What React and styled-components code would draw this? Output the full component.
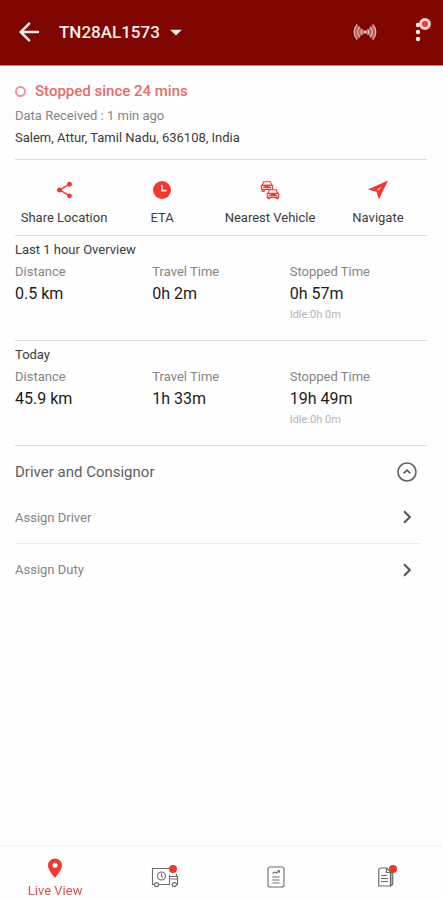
import { useState } from "react";
import styled, { createGlobalStyle } from "styled-components";
import {
  MdArrowBack,
  MdArrowDropDown,
  MdChevronRight,
  MdShare,
} from "react-icons/md";

const colors = {
  header: "#7f0600",
  accent: "#f03a30",
  status: "#e66b6b",
  text: "#3c3c3c",
  strong: "#1c1c1c",
  muted: "#858585",
  faint: "#b4b4b4",
  line: "#dcdcdc",
};

const GlobalStyle = createGlobalStyle`
  * {
    box-sizing: border-box;
  }

  body {
    margin: 0;
    background: #fefefe;
    color: ${colors.text};
    font-family: Roboto, "Liberation Sans", sans-serif;
  }

  button {
    padding: 0;
    border: none;
    background: none;
    color: inherit;
    font: inherit;
    cursor: pointer;
  }

  h1, h2, p, dl, dt, dd {
    margin: 0;
    font-weight: 400;
  }

  svg {
    display: block;
    flex: none;
  }
`;

const Page = styled.div`
  min-height: 100vh;
  display: flex;
  flex-direction: column;
`;

const Header = styled.header`
  display: flex;
  align-items: center;
  height: 66px;
  padding: 0 0 2px 14px;
  background: ${colors.header};
  border-bottom: 1px solid #b98682;
  color: #f8ece9;
`;

const VehicleButton = styled.button`
  display: flex;
  align-items: center;
  gap: 2px;
  margin: 0 auto 0 15px;

  h1 {
    font-size: 17px;
    font-weight: 500;
    line-height: 24px;
  }
`;

const HeaderButton = styled.button`
  position: relative;
  display: flex;
  justify-content: center;
  width: ${(props) => props.$width}px;
`;

const Badge = styled.span`
  position: absolute;
  top: ${(props) => props.$top}px;
  right: ${(props) => props.$right}px;
  width: ${(props) => (props.$ringed ? 12 : 8)}px;
  height: ${(props) => (props.$ringed ? 12 : 8)}px;
  border: ${(props) => (props.$ringed ? "3px solid #f8cfcb" : "none")};
  border-radius: 50%;
  background: ${colors.accent};
`;

const Content = styled.main`
  flex: 1;
  padding: 0 16px 0 15px;
`;

const Status = styled.section`
  padding: 14px 0 10px;
  border-bottom: 1px solid ${colors.line};
`;

const StatusTitle = styled.h2`
  display: flex;
  align-items: center;
  gap: 9px;
  margin-bottom: 3px;
  color: ${colors.status};
  font-size: 15px;
  line-height: 22px;

  && {
    font-weight: 500;
  }

  &::before {
    content: "";
    box-sizing: border-box;
    width: 11px;
    height: 11px;
    border: 2px solid #ee9494;
    border-radius: 50%;
  }
`;

const StatusText = styled.p`
  color: ${(props) => (props.$muted ? colors.muted : colors.text)};
  font-size: 13px;
  line-height: 22px;
`;

const Actions = styled.section`
  display: grid;
  grid-template-columns: 1fr 1fr 1.2fr 1fr;
  padding: 20px 0 7px;
  border-bottom: 1px solid ${colors.line};
`;

const ActionButton = styled.button`
  display: flex;
  flex-direction: column;
  align-items: center;
  gap: 8px;
  font-size: 13px;
  line-height: 20px;
  white-space: nowrap;

  svg {
    height: 20px;
    color: ${colors.accent};
  }
`;

const Overview = styled.section`
  padding: 3px 0 15px;
  border-bottom: 1px solid ${colors.line};
`;

const OverviewTitle = styled.h2`
  font-size: 13px;
  line-height: 22px;
`;

const StatGrid = styled.dl`
  display: grid;
  grid-template-columns: repeat(3, 1fr);
`;

const StatLabel = styled.dt`
  color: ${colors.muted};
  font-size: 13px;
  line-height: 22px;
`;

const StatValue = styled.dd`
  color: ${colors.strong};
  font-size: 16px;
  line-height: 22px;
`;

const StatNote = styled.dd`
  color: ${colors.faint};
  font-size: 11px;
  line-height: 20px;
`;

const Assignments = styled.section`
  padding: 6px 6px 0 0;
`;

const AssignHeader = styled.button`
  display: flex;
  align-items: center;
  justify-content: space-between;
  width: 100%;
  height: 39px;
  padding-right: 3px;
  color: #5e5e5e;

  span {
    font-size: 15px;
  }

  svg {
    transform: ${(props) => (props.$open ? "none" : "rotate(180deg)")};
  }
`;

const AssignRow = styled.button`
  display: flex;
  align-items: center;
  justify-content: space-between;
  width: 100%;
  height: 52px;
  padding-right: 1px;
  color: ${colors.muted};
  font-size: 13px;

  & + & {
    border-top: 1px solid #ececec;
  }

  svg {
    color: #5a5a5a;
  }
`;

const BottomNav = styled.nav`
  position: sticky;
  bottom: 0;
  display: grid;
  grid-template-columns: repeat(4, 1fr);
  height: 55px;
  padding-right: 2px;
  border-top: 1px solid #f3f3f3;
  background: #fefefe;
`;

const NavItem = styled.a`
  display: flex;
  flex-direction: column;
  align-items: center;
  justify-content: center;
  gap: 3px;
  padding-top: ${(props) => (props.$active ? 12 : 7)}px;
  color: ${(props) => (props.$active ? "#d9534c" : "#6c6c6c")};
  font-size: 13px;
  line-height: 20px;
  text-decoration: none;
`;

const NavIcon = styled.span`
  position: relative;
`;

const BroadcastIcon = () => (
  <svg width="24" height="18" viewBox="0 0 24 18" fill="none" stroke="#e3b9b4">
    <path
      d="M12 9L4 1.4a11 11 0 0 0 0 15.2zM12 9l8-7.6a11 11 0 0 1 0 15.2z"
      fill="#b0625d"
      stroke="none"
    />
    <circle cx="12" cy="9" r="1.8" fill="#e3b9b4" stroke="none" />
    <g strokeWidth="1.2" strokeLinecap="round">
      <path d="M9.2 6.6a3.6 3.6 0 0 0 0 4.8M14.8 6.6a3.6 3.6 0 0 1 0 4.8" />
      <path d="M6.6 4.2a7 7 0 0 0 0 9.6M17.4 4.2a7 7 0 0 1 0 9.6" />
      <path d="M4 1.6a11 11 0 0 0 0 14.8M20 1.6a11 11 0 0 1 0 14.8" />
    </g>
  </svg>
);

const DotsIcon = () => (
  <svg width="6" height="20" viewBox="0 0 6 20" fill="currentColor">
    <circle cx="3" cy="3" r="2.2" />
    <circle cx="3" cy="10" r="2.2" />
    <circle cx="3" cy="17" r="2.2" />
  </svg>
);

const ClockIcon = () => (
  <svg width="20" height="20" viewBox="0 0 20 20">
    <circle cx="10" cy="10" r="9" fill="currentColor" />
    <path d="M10 5v5.6h4.4" fill="none" stroke="#fde4e2" strokeWidth="1.6" />
  </svg>
);

const CarsIcon = () => (
  <svg
    width="20"
    height="20"
    viewBox="0 0 20 20"
    fill="none"
    stroke="currentColor"
    strokeWidth="1.1"
  >
    <path d="M2.4 5.2l1.1-3.4h7l1.3 3.4M1.3 5.4h11.3v4H1.6z" />
    <path d="M3 7.4h2.2M8 7.4h3.4M2.2 9.4v2h2v-2" />
    <path d="M4.6 5.4h4.8L8.2 7.6H5.8z" fill="currentColor" />
    <path
      d="M8.2 13.2l1.1-3.4h7l1.2 3.4M7.2 13.4h11.5v4H7.2z"
      fill="#fefefe"
    />
    <path d="M8 17.4v1.4h1.8v-1.4M16.2 17.4v1.4H18v-1.4M8.6 15.4h1.8M15.6 15.4h1.8" />
    <path d="M10.6 15.6l1-2h3l1 2z" fill="currentColor" />
  </svg>
);

const NavigateIcon = () => (
  <svg width="22" height="20" viewBox="0 0 22 20">
    <path d="M.8 9.4L21 .6l-9.2 18.8-2.3-7.6z" fill="currentColor" />
    <path d="M10.6 10.2l3-2.6" stroke="#fbc4c0" strokeWidth="1.2" />
  </svg>
);

const CollapseIcon = () => (
  <svg
    width="22"
    height="22"
    viewBox="0 0 22 22"
    fill="none"
    stroke="currentColor"
    strokeWidth="1.6"
  >
    <circle cx="11" cy="11" r="9" />
    <path d="M7.6 12.4L11 9.2l3.4 3.2" />
  </svg>
);

const PinIcon = () => (
  <svg width="16" height="20" viewBox="0 0 16 20">
    <path
      d="M8 .5a7 7 0 0 0-7 7C1 12.4 8 19.8 8 19.8S15 12.4 15 7.5a7 7 0 0 0-7-7z"
      fill={colors.accent}
    />
    <circle cx="8" cy="7.3" r="2.5" fill="#fefefe" />
  </svg>
);

const TruckIcon = () => (
  <svg
    width="28"
    height="22"
    viewBox="0 0 28 22"
    fill="none"
    stroke="currentColor"
    strokeWidth="1.1"
  >
    <path d="M3.5 18.5h-2v-16H18M18.5 9v9.5H7.5" />
    <path d="M18.5 10.5h8v8h-1M20.5 18.5h1M19.5 13h6.500M25.500 8v2.500" />
    <circle cx="5.5" cy="18.6" r="2" />
    <circle cx="23.4" cy="18.6" r="2" />
    <circle cx="10.5" cy="10" r="4" />
    <path d="M10.5 7.6V10l1.6 1.6" />
  </svg>
);

const ReportIcon = () => (
  <svg
    width="18"
    height="22"
    viewBox="0 0 18 22"
    fill="none"
    stroke="currentColor"
    strokeWidth="1.1"
  >
    <rect x="1" y="1" width="16" height="20" rx="2" />
    <path d="M5.5 7.5l2.2-1.6 1.6 1.2L12 5.2M10.4 4.8h2v2" />
    <path d="M5.5 11h7M5.5 14h7M5.5 17h7" />
  </svg>
);

const DocumentIcon = () => (
  <svg
    width="18"
    height="22"
    viewBox="0 0 18 22"
    fill="none"
    stroke="currentColor"
    strokeWidth="1.2"
  >
    <path d="M13 5.5l2.7 2v11l-2.2 1.5z" fill="#b5b5b5" />
    <path d="M1.7 4a2 2 0 0 1 2-2H10l3.5 4.5V20H1.7z" fill="#fefefe" />
    <path d="M9.5 2.2v4.3h4M4 9.5h6M4 12.5h7M4 15.5h7" />
  </svg>
);

const actions = [
  { label: "Share Location", icon: <MdShare size={21} /> },
  { label: "ETA", icon: <ClockIcon /> },
  { label: "Nearest Vehicle", icon: <CarsIcon /> },
  { label: "Navigate", icon: <NavigateIcon /> },
];

const overviews = [
  {
    title: "Last 1 hour Overview",
    stats: [
      { label: "Distance", value: "0.5 km" },
      { label: "Travel Time", value: "0h 2m" },
      { label: "Stopped Time", value: "0h 57m", note: "Idle:0h 0m" },
    ],
  },
  {
    title: "Today",
    stats: [
      { label: "Distance", value: "45.9 km" },
      { label: "Travel Time", value: "1h 33m" },
      { label: "Stopped Time", value: "19h 49m", note: "Idle:0h 0m" },
    ],
  },
];

const App = () => {
  const [open, setOpen] = useState(true);

  return (
    <Page>
      <GlobalStyle />
      <Header>
        <HeaderButton $width={30} aria-label="Back">
          <MdArrowBack size={30} />
        </HeaderButton>
        <VehicleButton>
          <h1>TN28AL1573</h1>
          <MdArrowDropDown size={28} />
        </VehicleButton>
        <HeaderButton $width={56} aria-label="Live tracking">
          <BroadcastIcon />
        </HeaderButton>
        <HeaderButton $width={50} aria-label="More options">
          <DotsIcon />
          <Badge $ringed $top={-4} $right={12} />
        </HeaderButton>
      </Header>

      <Content>
        <Status>
          <StatusTitle>Stopped since 24 mins</StatusTitle>
          <StatusText $muted>Data Received : 1 min ago</StatusText>
          <StatusText>Salem, Attur, Tamil Nadu, 636108, India</StatusText>
        </Status>

        <Actions>
          {actions.map(({ label, icon }) => (
            <ActionButton key={label}>
              {icon}
              {label}
            </ActionButton>
          ))}
        </Actions>

        {overviews.map(({ title, stats }) => (
          <Overview key={title}>
            <OverviewTitle>{title}</OverviewTitle>
            <StatGrid>
              {stats.map(({ label, value, note }) => (
                <div key={label}>
                  <StatLabel>{label}</StatLabel>
                  <StatValue>{value}</StatValue>
                  {note && <StatNote>{note}</StatNote>}
                </div>
              ))}
            </StatGrid>
          </Overview>
        ))}

        <Assignments>
          <AssignHeader
            $open={open}
            aria-expanded={open}
            onClick={() => setOpen(!open)}
          >
            <span>Driver and Consignor</span>
            <CollapseIcon />
          </AssignHeader>
          {open && (
            <>
              <AssignRow>
                Assign Driver
                <MdChevronRight size={26} />
              </AssignRow>
              <AssignRow>
                Assign Duty
                <MdChevronRight size={26} />
              </AssignRow>
            </>
          )}
        </Assignments>
      </Content>

      <BottomNav>
        <NavItem href="#live" $active>
          <PinIcon />
          Live View
        </NavItem>
        <NavItem href="#trips" aria-label="Trips">
          <NavIcon>
            <TruckIcon />
            <Badge $top={-1} $right={2} />
          </NavIcon>
        </NavItem>
        <NavItem href="#reports" aria-label="Reports">
          <ReportIcon />
        </NavItem>
        <NavItem href="#documents" aria-label="Documents">
          <NavIcon>
            <DocumentIcon />
            <Badge $top={-1} $right={-2} />
          </NavIcon>
        </NavItem>
      </BottomNav>
    </Page>
  );
};

export default App;
